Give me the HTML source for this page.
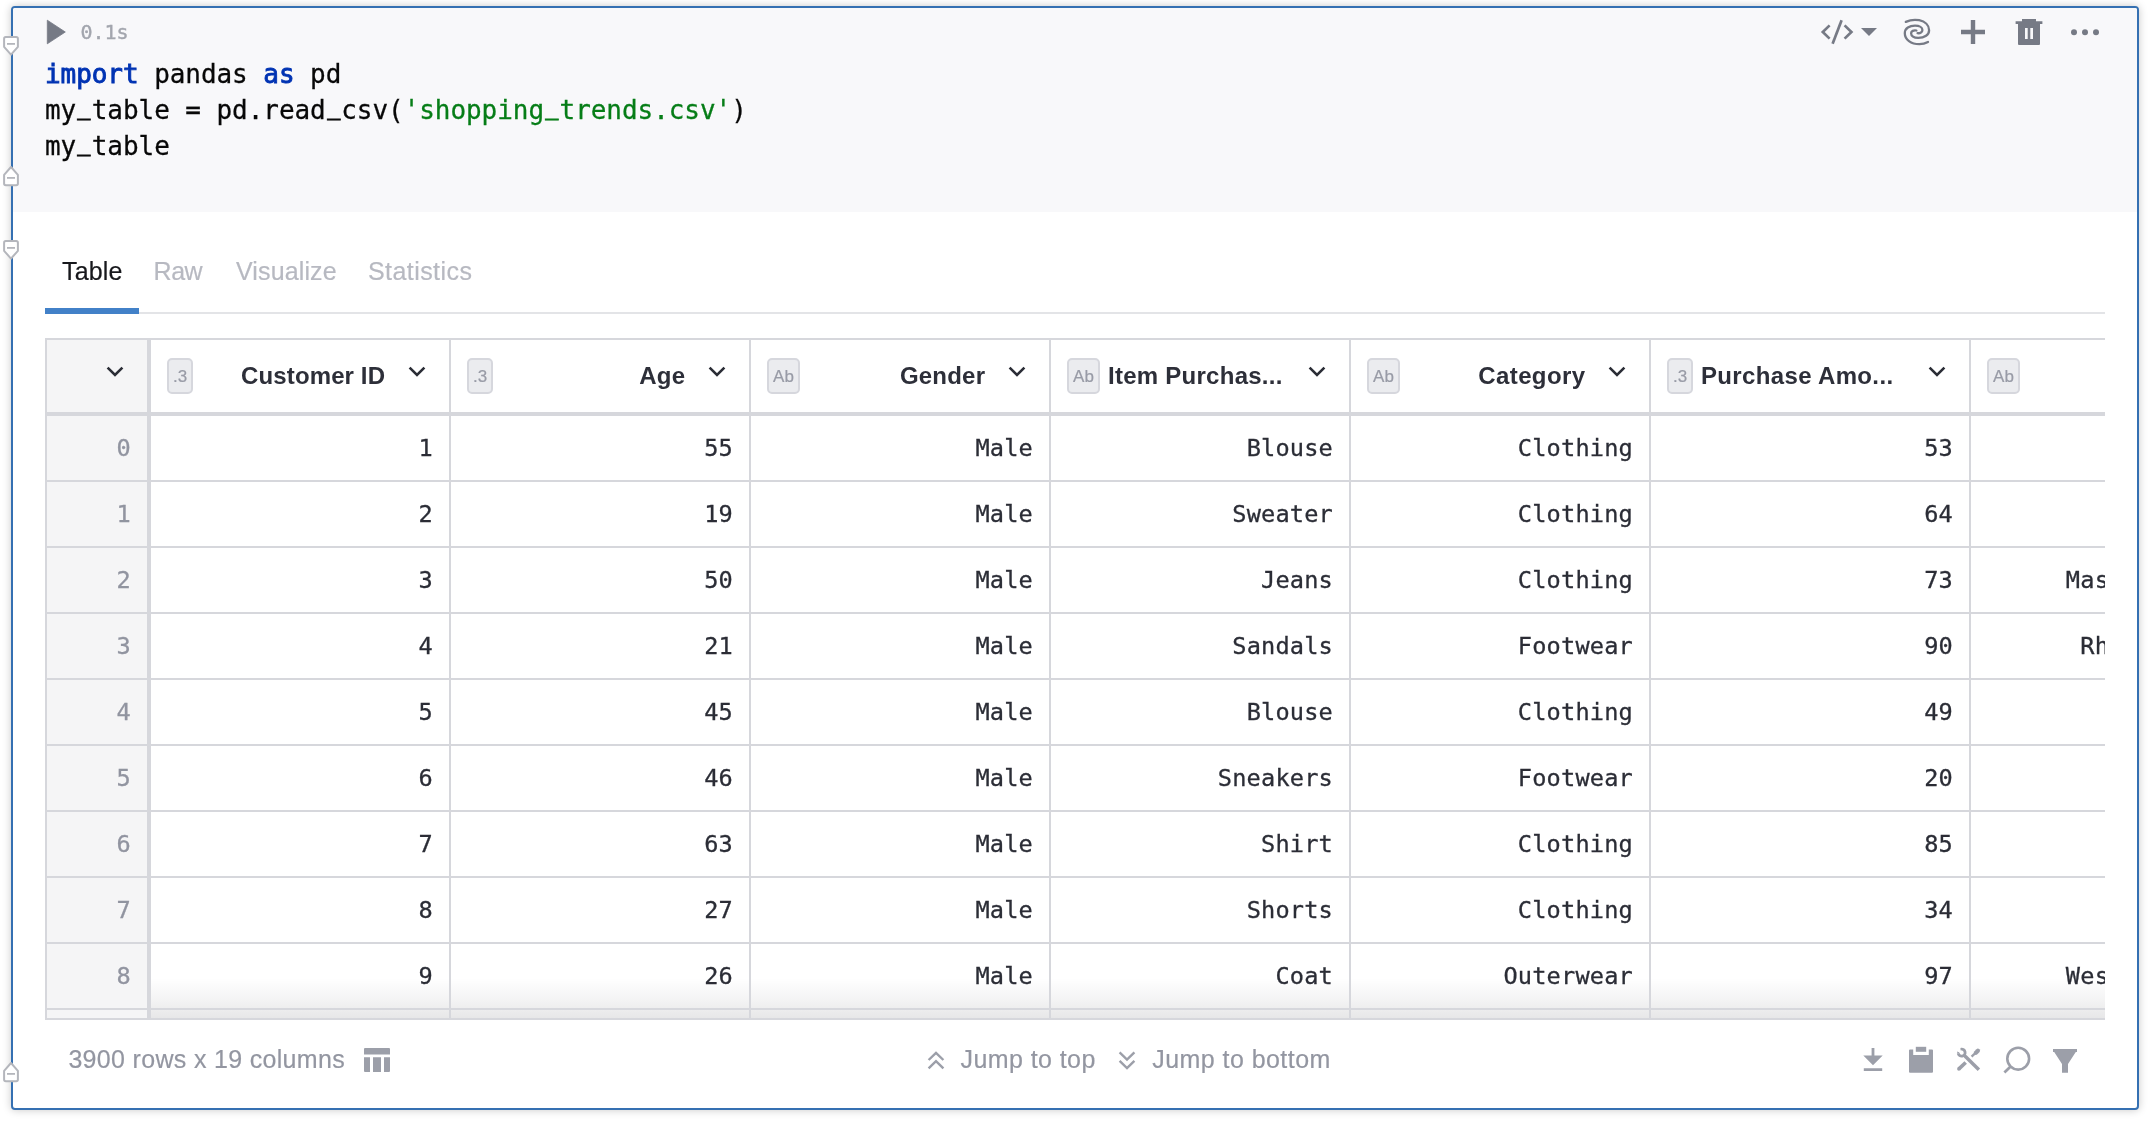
<!DOCTYPE html>
<html lang="en">
<head>
<meta charset="utf-8">
<title>Notebook cell</title>
<style>
  html, body { margin: 0; padding: 0; }
  body {
    width: 2148px; height: 1122px; overflow: hidden; position: relative;
    background: #ffffff;
    font-family: "Liberation Sans", sans-serif;
    -webkit-font-smoothing: antialiased;
  }
  .abs { position: absolute; }
  .cell {
    position: absolute; left: 11px; top: 6px; width: 2124px; height: 1100px;
    border: 2px solid #3570b2; border-radius: 4px;
    box-shadow: 0 0 9px rgba(0,0,0,0.22);
    background: #fff;
  }
  .code {
    position: absolute; left: 13px; top: 8px; width: 2124px; height: 204px;
    background: #f8f8fa; border-radius: 2px 2px 0 0;
  }
  .mono { font-family: "DejaVu Sans Mono", "Liberation Mono", monospace; }
  .time {
    position: absolute; left: 80.5px; top: 19px; font-size: 20px; line-height: 26px;
    color: #a3a6ae; letter-spacing: 0px; white-space: pre; -webkit-text-stroke: 0.4px #a3a6ae;
  }
  .line {
    position: absolute; left: 45px; font-size: 26px; line-height: 36px; height: 36px;
    color: #080808; white-space: pre; letter-spacing: -0.06px; -webkit-text-stroke: 0.28px #080808;
  }
  .kw { color: #0033b3; font-weight: normal; -webkit-text-stroke: 0.85px #0033b3; }
  .us { display: inline-block; position: relative; top: -4.6px; transform: scaleX(0.84); -webkit-text-stroke-width: 0.9px; }
  .str { color: #067d17; -webkit-text-stroke: 0.28px #067d17; }

  /* tabs */
  .tab { position: absolute; top: 256px; font-size: 25px; line-height: 30px; color: #b7b9c1; white-space: pre; -webkit-text-stroke: 0.2px #b7b9c1; }
  .tab.on { color: #17181c; -webkit-text-stroke: 0.2px #17181c; }
  .tabline { position: absolute; left: 45px; top: 312px; width: 2060px; height: 2px; background: #e3e4e7; }
  .tabon { position: absolute; left: 45px; top: 308px; width: 94px; height: 6px; background: #4281c8; }

  /* table */
  .tbl {
    position: absolute; left: 45px; top: 338px; width: 2060px; height: 682px; overflow: hidden;
    background: #fff;
  }
  .g { position: absolute; background: #d6d7dc; }
  .idxbg { position: absolute; left: 2px; top: 2px; width: 100px; height: 678px; background: #f5f5f6; }
  .hl {
    position: absolute; top: 23.5px; font-size: 24px; line-height: 28px; font-weight: bold;
    color: #2d2f39; white-space: pre; text-align: right;
  }
  .badge {
    position: absolute; top: 20px; height: 32px; border: 2px solid #d6d7dd; background: #ebecef;
    border-radius: 5px; color: #989ba6; font-size: 17px; line-height: 33px; text-align: center; -webkit-text-stroke: 0.2px #989ba6;
  }
  .b3 { width: 22px; }
  .bab { width: 29px; }
  .chev { position: absolute; top: 27px; width: 20px; height: 14px; }
  .c {
    position: absolute; font-size: 23.6px; letter-spacing: 0.19px; line-height: 30px; height: 30px; color: #2b2d36;
    white-space: pre; text-align: right; -webkit-text-stroke: 0.3px #2b2d36;
  }
  .c.i { color: #9194a0; -webkit-text-stroke: 0.3px #9194a0; }

  .foot { position: absolute; top: 1043.6px; font-size: 25px; line-height: 30px; color: #9396a1; white-space: pre; -webkit-text-stroke: 0.2px #9396a1; }
</style>
</head>
<body>
<div class="cell"></div>
<div id="layer" style="position:absolute;left:0;top:0;width:2148px;height:1122px;will-change:transform;">
<div class="code"></div>

<!-- run button + time -->
<svg class="abs" style="left:44px;top:16px" width="26" height="32" viewBox="0 0 26 32">
  <path d="M3.3 4.2 L21.3 16 L3.3 27.8 Z" fill="#767a85" stroke="#767a85" stroke-width="0.8" stroke-linejoin="round"/>
</svg>
<div class="time mono">0.1s</div>

<!-- code -->
<div class="line mono" style="top:56px"><span class="kw">import</span> pandas <span class="kw">as</span> pd</div>
<div class="line mono" style="top:92px">my<span class="us">_</span>table = pd.read<span class="us">_</span>csv(<span class="str">'shopping<span class="us">_</span>trends.csv'</span>)</div>
<div class="line mono" style="top:128px">my<span class="us">_</span>table</div>

<!--ICONS_TOP-->

<svg class="abs" style="left:1810px;top:10px" width="310" height="45" viewBox="1810 10 310 45" fill="none">
  <g stroke="#767a85" stroke-width="2.7" fill="none" stroke-linecap="butt" stroke-linejoin="miter">
    <path d="M1829.6 25.4 L1822.8 32 L1829.6 38.6"/>
    <path d="M1844.6 25.4 L1851.4 32 L1844.6 38.6"/>
    <path d="M1841.6 20.3 L1832.6 43.7"/>
  </g>
  <path d="M1861 28 L1877 28 L1869 36 Z" fill="#767a85"/>
  <!-- spiral -->
  <path d="M1905.8 21.9 C1910 19.9 1915.4 19.5 1919.2 20.2 C1925 21.4 1929.1 25.2 1929.1 30.2 C1929.1 34.8 1924.6 37.9 1918.2 37.9 C1913.6 37.9 1911.1 35.8 1911.1 33.3 C1911.1 31.2 1913.6 29.9 1916.4 30.5 M1928 41.9 C1925.4 43.4 1922.4 44.2 1919.4 44.2 C1911 44.2 1904.8 39.6 1904.8 33.2 C1904.8 28.2 1909.6 25.6 1915 25.6 C1919.6 25.6 1922.4 27.5 1922.4 30 C1922.4 32.2 1920.2 33.6 1917.6 33.2" stroke="#767a85" stroke-width="2.3" stroke-linecap="round" fill="none"/>
  <!-- plus -->
  <path d="M1961 29.8 H1985 V34.2 H1961 Z M1970.8 20 H1975.2 V44 H1970.8 Z" fill="#767a85"/>
  <!-- trash -->
  <path fill-rule="evenodd" fill="#767a85" d="M2022 19 H2036 V21.2 H2042.4 V23.9 H2015.6 V21.2 H2022 Z M2018 23.9 H2040 V44 Q2040 45 2039 45 H2019 Q2018 45 2018 44 Z M2025 28 V39 H2027.7 V28 Z M2030.3 28 V39 H2033 V28 Z"/>
  <!-- dots -->
  <circle cx="2074" cy="32.3" r="3" fill="#767a85"/>
  <circle cx="2085" cy="32.3" r="3" fill="#767a85"/>
  <circle cx="2096" cy="32.3" r="3" fill="#767a85"/>
</svg>

<!--/ICONS_TOP-->
<!--FOLDS-->
<svg class="abs" style="left:1px;top:34px" width="22" height="26" viewBox="0 0 22 26"><path d="M4.8 3.1 H15.2 Q16.9 3.1 16.9 4.8 V12.8 L10 20.6 L3.1 12.8 V4.8 Q3.1 3.1 4.8 3.1 Z" fill="#fff" stroke="#b4b6bc" stroke-width="2" stroke-linejoin="round"/><path d="M6 9.9 H14" stroke="#b4b6bc" stroke-width="1.8"/></svg>
<svg class="abs" style="left:1px;top:164px" width="22" height="26" viewBox="0 0 22 26"><path d="M4.8 21.2 H15.2 Q16.9 21.2 16.9 19.5 V10.8 L10 3 L3.1 10.8 V19.5 Q3.1 21.2 4.8 21.2 Z" fill="#fff" stroke="#b4b6bc" stroke-width="2" stroke-linejoin="round"/><path d="M6 13.9 H14" stroke="#b4b6bc" stroke-width="1.8"/></svg>
<svg class="abs" style="left:1px;top:238px" width="22" height="26" viewBox="0 0 22 26"><path d="M4.8 3.1 H15.2 Q16.9 3.1 16.9 4.8 V12.8 L10 20.6 L3.1 12.8 V4.8 Q3.1 3.1 4.8 3.1 Z" fill="#fff" stroke="#b4b6bc" stroke-width="2" stroke-linejoin="round"/><path d="M6 9.9 H14" stroke="#b4b6bc" stroke-width="1.8"/></svg>
<svg class="abs" style="left:1px;top:1060px" width="22" height="26" viewBox="0 0 22 26"><path d="M4.8 21.2 H15.2 Q16.9 21.2 16.9 19.5 V10.8 L10 3 L3.1 10.8 V19.5 Q3.1 21.2 4.8 21.2 Z" fill="#fff" stroke="#b4b6bc" stroke-width="2" stroke-linejoin="round"/><path d="M6 13.9 H14" stroke="#b4b6bc" stroke-width="1.8"/></svg>

<!--/FOLDS-->
<!--TABS-->

<div class="tabline"></div><div class="tabon"></div>
<div class="tab on" id="t1" style="left:62px;letter-spacing:0.15px">Table</div>
<div class="tab" id="t2" style="left:153.6px;letter-spacing:-0.5px">Raw</div>
<div class="tab" id="t3" style="left:236px;letter-spacing:0.13px">Visualize</div>
<div class="tab" id="t4" style="left:368px;letter-spacing:0.43px">Statistics</div>

<!--/TABS-->
<!--TABLE-->
<div class="tbl">
<div class="idxbg"></div>
<div class="abs" style="left:106px;top:640px;width:2300px;height:40px;background:linear-gradient(to bottom, rgba(20,20,30,0) 0%, rgba(20,20,30,0.045) 50%, rgba(20,20,30,0.10) 100%)"></div>
<div class="g" style="left:0;top:0;width:2300px;height:2px"></div>
<div class="g" style="left:0;top:0;width:2px;height:682px"></div>
<div class="g" style="left:0;top:74px;width:2300px;height:4px"></div>
<div class="g" style="left:102px;top:0;width:4px;height:682px"></div>
<div class="g" style="left:404px;top:0;width:2px;height:682px"></div>
<div class="g" style="left:704px;top:0;width:2px;height:682px"></div>
<div class="g" style="left:1004px;top:0;width:2px;height:682px"></div>
<div class="g" style="left:1304px;top:0;width:2px;height:682px"></div>
<div class="g" style="left:1604px;top:0;width:2px;height:682px"></div>
<div class="g" style="left:1924px;top:0;width:2px;height:682px"></div>
<div class="g" style="left:2224px;top:0;width:2px;height:682px"></div>
<div class="g" style="left:0;top:142px;width:2300px;height:2px"></div>
<div class="g" style="left:0;top:208px;width:2300px;height:2px"></div>
<div class="g" style="left:0;top:274px;width:2300px;height:2px"></div>
<div class="g" style="left:0;top:340px;width:2300px;height:2px"></div>
<div class="g" style="left:0;top:406px;width:2300px;height:2px"></div>
<div class="g" style="left:0;top:472px;width:2300px;height:2px"></div>
<div class="g" style="left:0;top:538px;width:2300px;height:2px"></div>
<div class="g" style="left:0;top:604px;width:2300px;height:2px"></div>
<div class="g" style="left:0;top:670px;width:2300px;height:2px"></div>
<div class="g" style="left:0;top:680px;width:2300px;height:2px"></div>
<svg class="chev" style="left:60px" viewBox="0 0 20 14"><path d="M2.6 2.6 L10 10 L17.4 2.6" fill="none" stroke="#2b2d36" stroke-width="2.6" stroke-linejoin="miter"/></svg>
<div class="badge b3" style="left:122px">.3</div>
<div class="hl" style="left:156px;width:184.12px;text-align:right;letter-spacing:0.12px">Customer ID</div>
<svg class="chev" style="left:362px" viewBox="0 0 20 14"><path d="M2.6 2.6 L10 10 L17.4 2.6" fill="none" stroke="#2b2d36" stroke-width="2.6" stroke-linejoin="miter"/></svg>
<div class="badge b3" style="left:422px">.3</div>
<div class="hl" style="left:456px;width:184.20px;text-align:right;letter-spacing:0.2px">Age</div>
<svg class="chev" style="left:662px" viewBox="0 0 20 14"><path d="M2.6 2.6 L10 10 L17.4 2.6" fill="none" stroke="#2b2d36" stroke-width="2.6" stroke-linejoin="miter"/></svg>
<div class="badge bab" style="left:722px">Ab</div>
<div class="hl" style="left:763px;width:177.20px;text-align:right;letter-spacing:0.2px">Gender</div>
<svg class="chev" style="left:962px" viewBox="0 0 20 14"><path d="M2.6 2.6 L10 10 L17.4 2.6" fill="none" stroke="#2b2d36" stroke-width="2.6" stroke-linejoin="miter"/></svg>
<div class="badge bab" style="left:1022px">Ab</div>
<div class="hl" style="left:1063px;width:177.26px;text-align:left;letter-spacing:0.26px">Item Purchas...</div>
<svg class="chev" style="left:1262px" viewBox="0 0 20 14"><path d="M2.6 2.6 L10 10 L17.4 2.6" fill="none" stroke="#2b2d36" stroke-width="2.6" stroke-linejoin="miter"/></svg>
<div class="badge bab" style="left:1322px">Ab</div>
<div class="hl" style="left:1363px;width:177.37px;text-align:right;letter-spacing:0.37px">Category</div>
<svg class="chev" style="left:1562px" viewBox="0 0 20 14"><path d="M2.6 2.6 L10 10 L17.4 2.6" fill="none" stroke="#2b2d36" stroke-width="2.6" stroke-linejoin="miter"/></svg>
<div class="badge b3" style="left:1622px">.3</div>
<div class="hl" style="left:1656px;width:204.35px;text-align:left;letter-spacing:0.35px">Purchase Amo...</div>
<svg class="chev" style="left:1882px" viewBox="0 0 20 14"><path d="M2.6 2.6 L10 10 L17.4 2.6" fill="none" stroke="#2b2d36" stroke-width="2.6" stroke-linejoin="miter"/></svg>
<div class="badge bab" style="left:1942px">Ab</div>
<div class="hl" style="left:1983px;width:183.30px;text-align:right;letter-spacing:0.3px">Location</div>
<svg class="chev" style="left:2182px" viewBox="0 0 20 14"><path d="M2.6 2.6 L10 10 L17.4 2.6" fill="none" stroke="#2b2d36" stroke-width="2.6" stroke-linejoin="miter"/></svg>
<div class="c i mono" style="left:2px;width:84px;top:94.6px">0</div>
<div class="c mono" style="left:106px;width:282px;top:94.6px">1</div>
<div class="c mono" style="left:406px;width:282px;top:94.6px">55</div>
<div class="c mono" style="left:706px;width:282px;top:94.6px">Male</div>
<div class="c mono" style="left:1006px;width:282px;top:94.6px">Blouse</div>
<div class="c mono" style="left:1306px;width:282px;top:94.6px">Clothing</div>
<div class="c mono" style="left:1606px;width:302px;top:94.6px">53</div>
<div class="c mono" style="left:1926px;width:282px;top:94.6px">Kentucky</div>
<div class="c i mono" style="left:2px;width:84px;top:160.6px">1</div>
<div class="c mono" style="left:106px;width:282px;top:160.6px">2</div>
<div class="c mono" style="left:406px;width:282px;top:160.6px">19</div>
<div class="c mono" style="left:706px;width:282px;top:160.6px">Male</div>
<div class="c mono" style="left:1006px;width:282px;top:160.6px">Sweater</div>
<div class="c mono" style="left:1306px;width:282px;top:160.6px">Clothing</div>
<div class="c mono" style="left:1606px;width:302px;top:160.6px">64</div>
<div class="c mono" style="left:1926px;width:282px;top:160.6px">Maine</div>
<div class="c i mono" style="left:2px;width:84px;top:226.6px">2</div>
<div class="c mono" style="left:106px;width:282px;top:226.6px">3</div>
<div class="c mono" style="left:406px;width:282px;top:226.6px">50</div>
<div class="c mono" style="left:706px;width:282px;top:226.6px">Male</div>
<div class="c mono" style="left:1006px;width:282px;top:226.6px">Jeans</div>
<div class="c mono" style="left:1306px;width:282px;top:226.6px">Clothing</div>
<div class="c mono" style="left:1606px;width:302px;top:226.6px">73</div>
<div class="c mono" style="left:1926px;width:282px;top:226.6px">Massachusetts</div>
<div class="c i mono" style="left:2px;width:84px;top:292.6px">3</div>
<div class="c mono" style="left:106px;width:282px;top:292.6px">4</div>
<div class="c mono" style="left:406px;width:282px;top:292.6px">21</div>
<div class="c mono" style="left:706px;width:282px;top:292.6px">Male</div>
<div class="c mono" style="left:1006px;width:282px;top:292.6px">Sandals</div>
<div class="c mono" style="left:1306px;width:282px;top:292.6px">Footwear</div>
<div class="c mono" style="left:1606px;width:302px;top:292.6px">90</div>
<div class="c mono" style="left:1926px;width:282px;top:292.6px">Rhode Island</div>
<div class="c i mono" style="left:2px;width:84px;top:358.6px">4</div>
<div class="c mono" style="left:106px;width:282px;top:358.6px">5</div>
<div class="c mono" style="left:406px;width:282px;top:358.6px">45</div>
<div class="c mono" style="left:706px;width:282px;top:358.6px">Male</div>
<div class="c mono" style="left:1006px;width:282px;top:358.6px">Blouse</div>
<div class="c mono" style="left:1306px;width:282px;top:358.6px">Clothing</div>
<div class="c mono" style="left:1606px;width:302px;top:358.6px">49</div>
<div class="c mono" style="left:1926px;width:282px;top:358.6px">Oregon</div>
<div class="c i mono" style="left:2px;width:84px;top:424.6px">5</div>
<div class="c mono" style="left:106px;width:282px;top:424.6px">6</div>
<div class="c mono" style="left:406px;width:282px;top:424.6px">46</div>
<div class="c mono" style="left:706px;width:282px;top:424.6px">Male</div>
<div class="c mono" style="left:1006px;width:282px;top:424.6px">Sneakers</div>
<div class="c mono" style="left:1306px;width:282px;top:424.6px">Footwear</div>
<div class="c mono" style="left:1606px;width:302px;top:424.6px">20</div>
<div class="c mono" style="left:1926px;width:282px;top:424.6px">Wyoming</div>
<div class="c i mono" style="left:2px;width:84px;top:490.6px">6</div>
<div class="c mono" style="left:106px;width:282px;top:490.6px">7</div>
<div class="c mono" style="left:406px;width:282px;top:490.6px">63</div>
<div class="c mono" style="left:706px;width:282px;top:490.6px">Male</div>
<div class="c mono" style="left:1006px;width:282px;top:490.6px">Shirt</div>
<div class="c mono" style="left:1306px;width:282px;top:490.6px">Clothing</div>
<div class="c mono" style="left:1606px;width:302px;top:490.6px">85</div>
<div class="c mono" style="left:1926px;width:282px;top:490.6px">Montana</div>
<div class="c i mono" style="left:2px;width:84px;top:556.6px">7</div>
<div class="c mono" style="left:106px;width:282px;top:556.6px">8</div>
<div class="c mono" style="left:406px;width:282px;top:556.6px">27</div>
<div class="c mono" style="left:706px;width:282px;top:556.6px">Male</div>
<div class="c mono" style="left:1006px;width:282px;top:556.6px">Shorts</div>
<div class="c mono" style="left:1306px;width:282px;top:556.6px">Clothing</div>
<div class="c mono" style="left:1606px;width:302px;top:556.6px">34</div>
<div class="c mono" style="left:1926px;width:282px;top:556.6px">Louisiana</div>
<div class="c i mono" style="left:2px;width:84px;top:622.6px">8</div>
<div class="c mono" style="left:106px;width:282px;top:622.6px">9</div>
<div class="c mono" style="left:406px;width:282px;top:622.6px">26</div>
<div class="c mono" style="left:706px;width:282px;top:622.6px">Male</div>
<div class="c mono" style="left:1006px;width:282px;top:622.6px">Coat</div>
<div class="c mono" style="left:1306px;width:282px;top:622.6px">Outerwear</div>
<div class="c mono" style="left:1606px;width:302px;top:622.6px">97</div>
<div class="c mono" style="left:1926px;width:282px;top:622.6px">West Virginia</div>
</div>
<!--/TABLE-->
<!--FOOTER-->

<div class="foot" id="f1" style="left:68.4px;letter-spacing:0.32px">3900 rows x 19 columns</div>
<svg class="abs" style="left:364px;top:1048px" width="26" height="24" viewBox="0 0 26 24"><path fill="#9c9fa9" d="M1 0 H25 Q26 0 26 1 V6.6 H0 V1 Q0 0 1 0 Z M0 9.2 H6 V24 H1 Q0 24 0 23 Z M9 9.2 H17 V24 H9 Z M20 9.2 H26 V23 Q26 24 25 24 H20 Z"/></svg>
<svg class="abs" style="left:926px;top:1049px" width="20" height="22" viewBox="0 0 20 22"><g fill="none" stroke="#9c9fa9" stroke-width="2.4"><path d="M2.6 11 L10 3.8 L17.4 11"/><path d="M2.6 19.4 L10 12.2 L17.4 19.4"/></g></svg>
<div class="foot" id="f2" style="left:960.6px;letter-spacing:0.41px">Jump to top</div>
<svg class="abs" style="left:1117px;top:1049px" width="20" height="22" viewBox="0 0 20 22"><g fill="none" stroke="#9c9fa9" stroke-width="2.4"><path d="M2.6 3.4 L10 10.6 L17.4 3.4"/><path d="M2.6 11.8 L10 19 L17.4 11.8"/></g></svg>
<div class="foot" id="f3" style="left:1152.2px;letter-spacing:0.45px">Jump to bottom</div>
<svg class="abs" style="left:1840px;top:1030px" width="260" height="60" viewBox="1840 1030 260 60">
  <g fill="#9c9fa9">
    <!-- download -->
    <path d="M1871.6 1048 H1874.4 V1055.4 H1882.7 L1873 1065.2 L1863.3 1055.4 H1871.6 Z M1863.8 1068.2 H1882.2 V1071 H1863.8 Z"/>
    <!-- clipboard -->
    <path d="M1915.8 1046.8 H1926.2 V1051.8 H1915.8 Z"/>
    <path d="M1909 1050.4 Q1909 1049.4 1910 1049.4 H1913.2 V1055 H1928.8 V1049.4 H1932 Q1933 1049.4 1933 1050.4 V1071.7 Q1933 1072.7 1932 1072.7 H1910 Q1909 1072.7 1909 1071.7 Z"/>
    <!-- filter -->
    <path d="M2053 1049 H2077 V1052 H2075.8 L2068 1063.9 V1072.7 H2062 V1063.9 L2054.2 1052 H2053 Z"/>
  </g>
  <!-- tools -->
  <g stroke="#9c9fa9" fill="none">
    <path d="M1961.0 1049.2 A3.5 3.5 0 1 1 1958.2 1053.4" stroke-width="2.8"/>
    <path d="M1960.4 1048.1 L1962.6 1048.9 L1960.6 1050.6 Z M1957.0 1051.5 L1957.6 1053.9 L1959.6 1052.6 Z" fill="#9c9fa9" stroke="none"/>
    <path d="M1963.4 1054.5 L1978.9 1069.65" stroke-width="3.5"/>
    <path d="M1965.7 1062.45 L1958.9 1068.9" stroke-width="3.6"/>
    <circle cx="1958.9" cy="1068.9" r="1.8" fill="#9c9fa9" stroke="none"/>
    <path d="M1971.6 1056.6 L1975.8 1052.6" stroke-width="2.3"/>
    <path d="M1975.9 1052.8 L1977.9 1050.8" stroke-width="4.2" stroke-linecap="round"/>
  </g>
  <!-- search -->
  <circle cx="2018.2" cy="1058.7" r="10.9" fill="none" stroke="#9c9fa9" stroke-width="2.6"/>
  <path d="M2010.6 1066.6 L2004.4 1072.4" stroke="#9c9fa9" stroke-width="2.8" fill="none"/>
</svg>

<!--/FOOTER-->
</div>
</body>
</html>
